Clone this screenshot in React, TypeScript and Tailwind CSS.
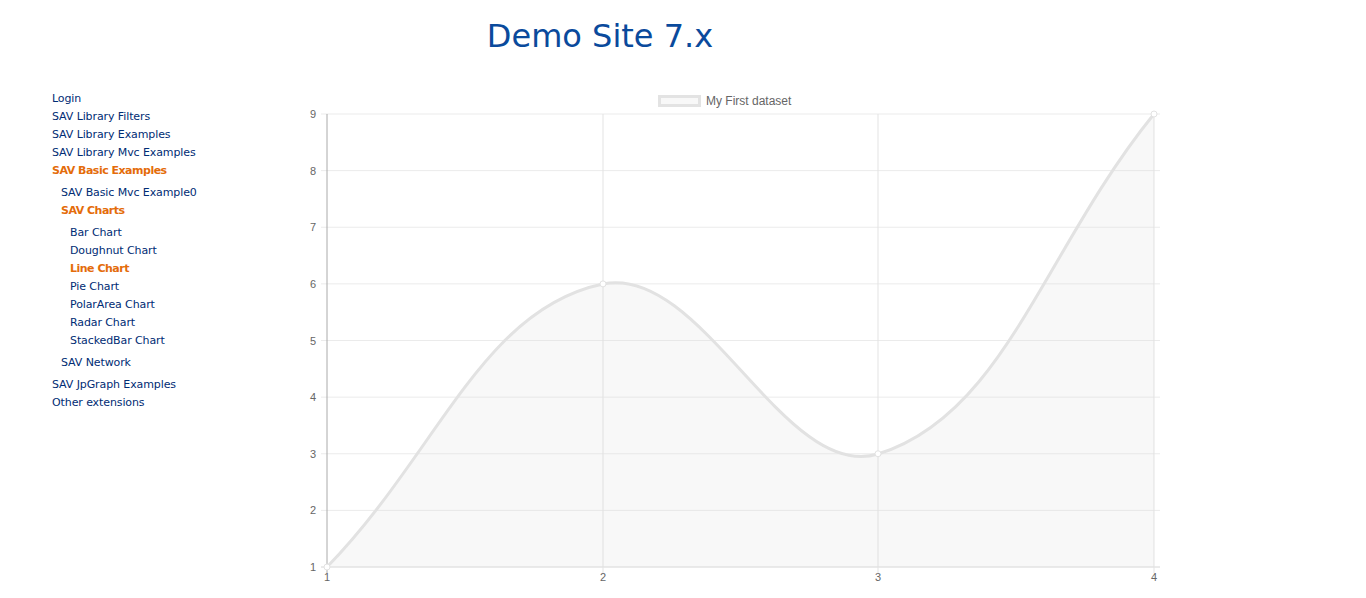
import React from "react";

type Item = { label: string; active?: boolean; children?: Item[] };

const menu: Item[] = [
  { label: "Login" },
  { label: "SAV Library Filters" },
  { label: "SAV Library Examples" },
  { label: "SAV Library Mvc Examples" },
  {
    label: "SAV Basic Examples",
    active: true,
    children: [
      { label: "SAV Basic Mvc Example0" },
      {
        label: "SAV Charts",
        active: true,
        children: [
          { label: "Bar Chart" },
          { label: "Doughnut Chart" },
          { label: "Line Chart", active: true },
          { label: "Pie Chart" },
          { label: "PolarArea Chart" },
          { label: "Radar Chart" },
          { label: "StackedBar Chart" },
        ],
      },
      { label: "SAV Network" },
    ],
  },
  { label: "SAV JpGraph Examples" },
  { label: "Other extensions" },
];

function MenuList({ items, nested }: { items: Item[]; nested?: boolean }) {
  return (
    <ul className={nested ? "pl-[9px] my-1" : ""}>
      {items.map((it) => (
        <li key={it.label}>
          <a
            href="#"
            className={
              it.active
                ? "block leading-[18px] font-bold text-[#e46c0a] tracking-[-0.5px]"
                : "block leading-[18px] text-[#002c74] tracking-[-0.1px]"
            }
          >
            {it.label}
          </a>
          {it.children && <MenuList items={it.children} nested />}
        </li>
      ))}
    </ul>
  );
}

// chart geometry in page pixels
const xs = [327, 603, 878, 1154];
const yOf = (v: number) => 567 - (v - 1) * 56.625;
const data = [1, 6, 3, 9];

const curve =
  "M327,567 C437.4,453.8 481.8,308.9 603,284 C702.2,263.7 784.4,482.9 878,454 C1004.8,414.9 1043.6,250 1154,114";

function LineChart() {
  const ticks = [1, 2, 3, 4, 5, 6, 7, 8, 9];
  return (
    <svg
      width={870}
      height={502}
      viewBox="300 88 870 502"
      className="block"
      style={{ fontFamily: '"Liberation Sans", Arial, sans-serif' }}
    >
      {/* legend */}
      <rect x={659.5} y={96.5} width={40} height={9} fill="#f8f8f8" stroke="#e3e3e3" strokeWidth={3} />
      <text x={706} y={104.5} fontSize={12} fill="#666">
        My First dataset
      </text>

      {/* horizontal grid */}
      {ticks.map((t) => (
        <g key={t}>
          <line x1={321} x2={1160} y1={yOf(t)} y2={yOf(t)} stroke={t === 1 ? "#d6d6d6" : "#ebebeb"} strokeWidth={1} />
          <text x={316} y={yOf(t) + 4} fontSize={11} fill="#666" textAnchor="end">
            {t}
          </text>
        </g>
      ))}

      {/* vertical grid */}
      {xs.map((x, i) => (
        <g key={x}>
          <line x1={x} x2={x} y1={114} y2={573} stroke={i === 0 ? "#aaaaaa" : "#e3e3e3"} strokeWidth={1} />
          <text x={x} y={581} fontSize={11} fill="#666" textAnchor="middle">
            {i + 1}
          </text>
        </g>
      ))}

      {/* dataset */}
      <path d={`${curve} L1154,567 L327,567 Z`} fill="rgba(220,220,220,0.2)" />
      <path d={curve} fill="none" stroke="#e2e2e2" strokeWidth={3} />
      {data.map((v, i) => (
        <circle key={i} cx={xs[i]} cy={yOf(v)} r={3} fill="#ffffff" stroke="#e2e2e2" strokeWidth={1} />
      ))}
    </svg>
  );
}

export default function App() {
  return (
    <div className="min-h-screen bg-white" style={{ fontFamily: '"DejaVu Sans", Verdana, sans-serif' }}>
      <header className="w-[1200px] pt-4 pb-8 text-center">
        <h1 className="text-[32px] leading-[40px] text-[#0a4a9c]">Demo Site 7.x</h1>
      </header>
      <div className="flex">
        <nav className="w-[300px] pl-[52px] pt-[2px] text-[11px]">
          <MenuList items={menu} />
        </nav>
        <LineChart />
      </div>
    </div>
  );
}
